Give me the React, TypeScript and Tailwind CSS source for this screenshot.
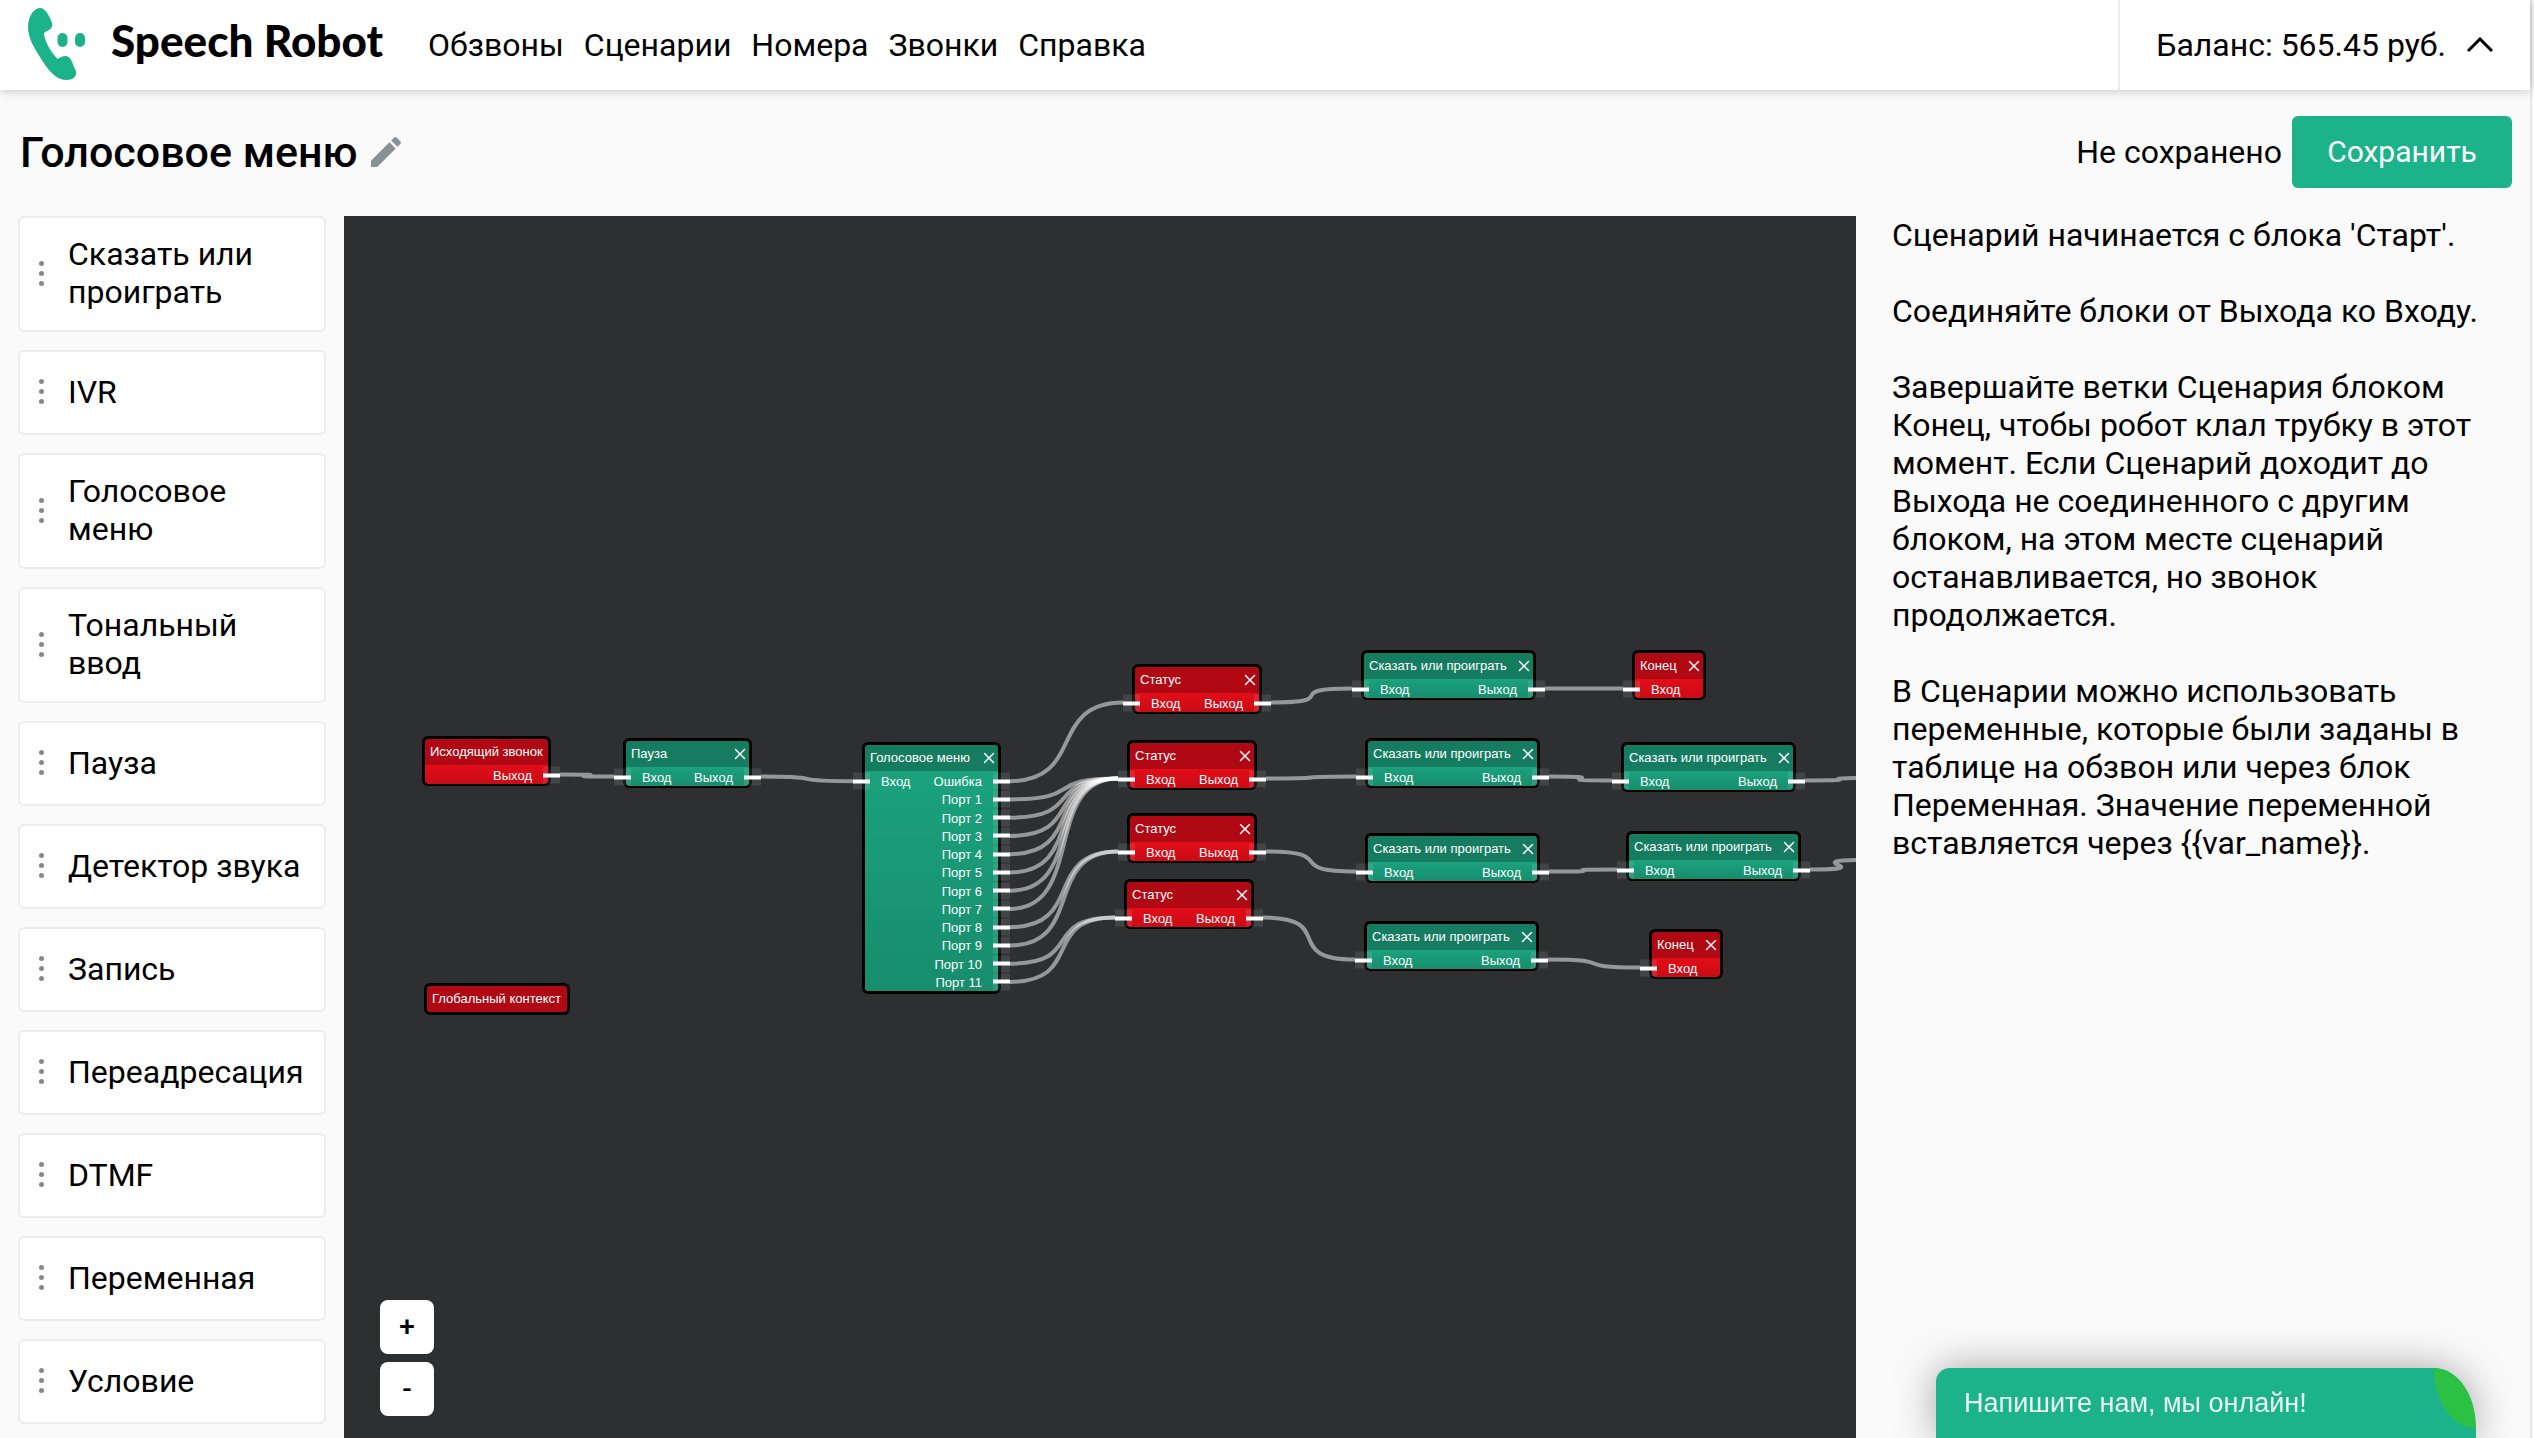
import React from 'react';
import { X } from 'lucide-react';
import { MdEdit } from 'react-icons/md';

type Output = { label: string; to?: string; dangling?: [number, number] };

type FlowNode = {
  id: string;
  title: string;
  color: 'red' | 'green';
  x: number;
  y: number;
  w: number;
  h: number;
  input?: boolean;
  closable?: boolean;
  outputs: Output[];
};

const MENU_LINKS = ['Обзвоны', 'Сценарии', 'Номера', 'Звонки', 'Справка'];

const BLOCKS = [
  'Сказать или проиграть',
  'IVR',
  'Голосовое меню',
  'Тональный ввод',
  'Пауза',
  'Детектор звука',
  'Запись',
  'Переадресация',
  'DTMF',
  'Переменная',
  'Условие',
];

const HELP = [
  "Сценарий начинается с блока 'Старт'.",
  'Соединяйте блоки от Выхода ко Входу.',
  'Завершайте ветки Сценария блоком Конец, чтобы робот клал трубку в этот момент. Если Сценарий доходит до Выхода не соединенного с другим блоком, на этом месте сценарий останавливается, но звонок продолжается.',
  'В Сценарии можно использовать переменные, которые были заданы в таблице на обзвон или через блок Переменная. Значение переменной вставляется через {{var_name}}.',
];

const say = (id: string, x: number, y: number, out: Omit<Output, 'label'>): FlowNode => ({
  id,
  title: 'Сказать или проиграть',
  color: 'green',
  x,
  y,
  w: 175,
  h: 50,
  input: true,
  closable: true,
  outputs: [{ label: 'Выход', ...out }],
});

const status = (id: string, x: number, y: number, to: string): FlowNode => ({
  id,
  title: 'Статус',
  color: 'red',
  x,
  y,
  w: 130,
  h: 50,
  input: true,
  closable: true,
  outputs: [{ label: 'Выход', to }],
});

const end = (id: string, x: number, y: number): FlowNode => ({
  id,
  title: 'Конец',
  color: 'red',
  x,
  y,
  w: 74,
  h: 50,
  input: true,
  closable: true,
  outputs: [],
});

const portTarget = (port: number) => {
  if (port <= 7) return 'status2';
  return port <= 9 ? 'status3' : 'status4';
};

const NODES: FlowNode[] = [
  {
    id: 'start',
    title: 'Исходящий звонок',
    color: 'red',
    x: 78,
    y: 520,
    w: 129,
    h: 50,
    outputs: [{ label: 'Выход', to: 'pause' }],
  },
  {
    id: 'pause',
    title: 'Пауза',
    color: 'green',
    x: 279,
    y: 522,
    w: 129,
    h: 50,
    input: true,
    closable: true,
    outputs: [{ label: 'Выход', to: 'menu' }],
  },
  {
    id: 'menu',
    title: 'Голосовое меню',
    color: 'green',
    x: 518,
    y: 526,
    w: 139,
    h: 252,
    input: true,
    closable: true,
    outputs: [
      { label: 'Ошибка', to: 'status1' },
      ...Array.from({ length: 11 }, (_, i) => ({
        label: `Порт ${i + 1}`,
        to: portTarget(i + 1),
      })),
    ],
  },
  { id: 'global', title: 'Глобальный контекст', color: 'red', x: 80, y: 767, w: 146, h: 32, outputs: [] },
  status('status1', 788, 448, 'say1'),
  status('status2', 783, 524, 'say2'),
  status('status3', 783, 597, 'say3'),
  status('status4', 780, 663, 'say4'),
  say('say1', 1017, 434, { to: 'end1' }),
  say('say2', 1021, 522, { to: 'say5' }),
  say('say3', 1021, 617, { to: 'say6' }),
  say('say4', 1020, 705, { to: 'end2' }),
  say('say5', 1277, 526, { dangling: [1529, 562] }),
  say('say6', 1282, 615, { dangling: [1522, 644] }),
  end('end1', 1288, 434),
  end('end2', 1305, 713),
];

// border + title + the small gap above the first row
const ROWS_TOP = 30;
const CURVE = 75;

const rowHeight = (node: FlowNode) => (node.h - ROWS_TOP - 3) / Math.max(node.outputs.length, 1);
const portY = (node: FlowNode, row: number) => node.y + ROWS_TOP + rowHeight(node) * (row + 0.5);

const edges = NODES.flatMap((node) =>
  node.outputs.map((output, row) => {
    const target = NODES.find((n) => n.id === output.to);
    const x1 = node.x + node.w + 9;
    const y1 = portY(node, row);
    const [x2, y2] = target ? [target.x - 9, portY(target, 0)] : output.dangling || [x1, y1];
    return `M${x1} ${y1} C${x1 + CURVE} ${y1} ${x2 - CURVE} ${y2} ${x2} ${y2}`;
  })
);

const Logo = () => (
  <svg className="h-[90px] w-[86px] shrink-0" viewBox="0 0 86 90" fill="#1db38a" aria-hidden="true">
    <path d="M28 27C28 15 35 8 40 8C45 8 49 15 52 23C53 28 50 29.5 48 30.5C45 32 43.5 32.5 44 35C46 44 52 53 57.5 59C60 57 63 56 66 56C71 56 73 65 76 71C77 77 73 80 66 80C54 80 45 65 38 54C32 44 28 36 28 27Z" />
    <rect x="57.5" y="33" width="10" height="14" rx="5" />
    <rect x="75" y="33" width="10" height="14" rx="5" />
  </svg>
);

const Header = () => (
  <header className="relative flex h-[90px] shrink-0 items-stretch bg-white shadow-[0_0_10px_rgba(0,0,0,0.25)]">
    <a href="#" className="flex items-center">
      <Logo />
      <span className="mb-[10px] ml-[25px] w-[281px] font-[Lato,sans-serif] text-[44px] leading-[48px] font-black whitespace-nowrap">
        Speech Robot
      </span>
    </a>
    <nav className="ml-9 flex items-center gap-5">
      {MENU_LINKS.map((link) => (
        <a key={link} href="#">
          {link}
        </a>
      ))}
    </nav>
    <button
      type="button"
      className="ml-auto flex items-center gap-5 border-l-2 border-[#ececec] pr-9 pl-9"
    >
      Баланс: 565.45 руб.
      <svg className="h-4 w-7" viewBox="0 0 28 16" fill="none" stroke="black" strokeWidth="3">
        <path d="M2 14L14 2L26 14" />
      </svg>
    </button>
  </header>
);

const TitleBar = () => (
  <div className="flex h-[126px] shrink-0 items-center justify-between pr-[18px] pb-0.5 pl-5">
    <div className="flex items-center gap-2">
      <h1 className="text-[43px] leading-[48px] font-medium">Голосовое меню</h1>
      <button type="button" aria-label="Переименовать">
        <MdEdit className="size-10 text-[#8a9194]" />
      </button>
    </div>
    <div className="flex items-center gap-[10px]">
      <span>Не сохранено</span>
      <button
        type="button"
        className="h-[72px] w-[220px] rounded-md bg-[#1db38a] text-[30px] text-white"
      >
        Сохранить
      </button>
    </div>
  </div>
);

const BlockList = () => (
  <ul className="flex w-[344px] shrink-0 flex-col gap-[18px] px-[18px]">
    {BLOCKS.map((block) => (
      <li
        key={block}
        draggable
        className="flex min-h-[85px] shrink-0 items-center gap-6 rounded-md border-2 border-[#ececec] bg-white pt-[17px] pr-4 pb-[19px] pl-[19px]"
      >
        <span className="flex shrink-0 flex-col gap-[5px]">
          <i className="size-[5px] rounded-full bg-[#888888]" />
          <i className="size-[5px] rounded-full bg-[#888888]" />
          <i className="size-[5px] rounded-full bg-[#888888]" />
        </span>
        <span>{block}</span>
      </li>
    ))}
  </ul>
);

const Port = ({ side }: { side: 'left' | 'right' }) => (
  <span
    className={`absolute top-1/2 flex h-[17px] w-[17px] -translate-y-1/2 items-center bg-white/10 ${
      side === 'left' ? '-left-3' : '-right-3'
    }`}
  >
    <i className="h-1 w-full bg-white" />
  </span>
);

const NodeCard = ({ node }: { node: FlowNode }) => {
  const red = node.color === 'red';
  const rows = node.outputs.length ? node.outputs : node.input ? [{ label: '' }] : [];

  return (
    <section
      className={`absolute flex flex-col rounded-md border-[3px] border-black text-[13px] leading-4 text-white ${
        red ? 'bg-[#b00913]' : 'bg-[#167c60]'
      }`}
      style={{ left: node.x, top: node.y, width: node.w, height: node.h }}
    >
      <header className="flex h-[26px] shrink-0 items-center justify-between pl-[5px] whitespace-nowrap">
        {node.title}
        {node.closable && (
          <button type="button" aria-label="Удалить блок">
            <X className="size-[18px]" strokeWidth={2} />
          </button>
        )}
      </header>
      {rows.length > 0 && (
        <div
          className={`flex flex-1 flex-col rounded-b-sm bg-linear-to-b pt-px ${
            red ? 'from-[#e20d18] to-[#c90c16]' : 'from-[#1ba27d] to-[#178d6c]'
          }`}
        >
          {rows.map((output, row) => (
            <div key={output.label} className="relative flex min-h-0 flex-1 items-center justify-between px-4">
              {node.input && row === 0 && <Port side="left" />}
              <span className="pt-0.5">{node.input && row === 0 ? 'Вход' : ''}</span>
              <span className="pt-0.5">{output.label}</span>
              {output.label && <Port side="right" />}
            </div>
          ))}
        </div>
      )}
    </section>
  );
};

const Canvas = () => (
  <main className="relative min-w-0 flex-1 overflow-hidden bg-[#2e2f31] font-['Liberation_Sans',Arial,sans-serif]">
    {NODES.map((node) => (
      <NodeCard key={node.id} node={node} />
    ))}
    <svg className="pointer-events-none absolute inset-0 h-full w-full" fill="none">
      {edges.map((d) => (
        <path key={d} d={d} stroke="white" strokeOpacity="0.5" strokeWidth="4" />
      ))}
    </svg>
    <div className="absolute bottom-[22px] left-9 flex flex-col gap-2 font-[Roboto,sans-serif] text-[28px] font-medium">
      <button type="button" className="size-[54px] rounded-lg bg-white">
        +
      </button>
      <button type="button" className="size-[54px] rounded-lg bg-white">
        -
      </button>
    </div>
  </main>
);

const ChatWidget = () => (
  <button
    type="button"
    className="fixed right-[58px] bottom-0 h-[70px] w-[540px] overflow-hidden rounded-tl-[14px] rounded-tr-[42px_60px] bg-[#1db38a] pl-7 text-left font-['Liberation_Sans',Arial,sans-serif] text-[27px] text-[#e8f6f1] shadow-[0_0_40px_rgba(0,0,0,0.35)]"
  >
    Напишите нам, мы онлайн!
    <i className="absolute top-0 right-0 h-[60px] w-[42px] rounded-tr-[42px_60px] rounded-bl-[42px_60px] bg-[#2cc143]" />
  </button>
);

const App = () => {
  return (
    <div className="h-screen overflow-hidden bg-[#fafafa] pr-[2px] font-[Roboto,sans-serif] text-[32px] leading-[38px] text-black">
      <div className="flex h-full flex-col border-r-2 border-[#e8e8e8]">
        <Header />
        <TitleBar />
        <div className="flex min-h-0 flex-1">
          <BlockList />
          <Canvas />
          <aside className="flex w-[674px] shrink-0 flex-col gap-[38px] px-9">
            {HELP.map((text) => (
              <p key={text}>{text}</p>
            ))}
          </aside>
        </div>
      </div>
      <ChatWidget />
    </div>
  );
};

export default App;
